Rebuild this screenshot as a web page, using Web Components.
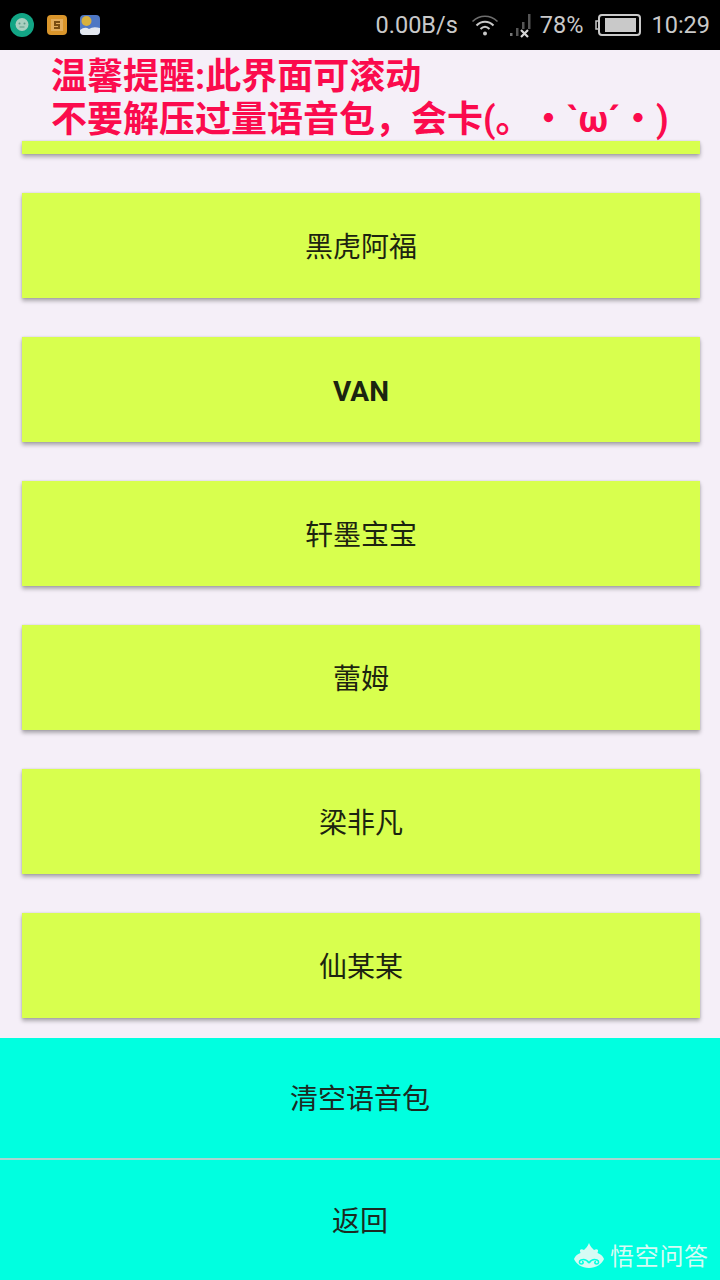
<!DOCTYPE html>
<html>
<head>
<meta charset="utf-8">
<style>
  html, body { margin: 0; padding: 0; background: #f5eff8; }
  body { width: 720px; height: 1280px; overflow: hidden; display: flex; flex-direction: column; position: relative;
    font-family: Roboto, "Noto Sans CJK SC", sans-serif; }
</style>
</head>
<body>
<status-bar></status-bar>
<tip-header>温馨提醒:此界面可滚动<br>不要解压过量语音包，会卡(。<span style="margin-left:17px">・`ω´・)</span></tip-header>
<voice-list>
  <voice-card partial></voice-card>
  <voice-card>黑虎阿福</voice-card>
  <voice-card heavy>VAN</voice-card>
  <voice-card>轩墨宝宝</voice-card>
  <voice-card>蕾姆</voice-card>
  <voice-card>梁非凡</voice-card>
  <voice-card>仙某某</voice-card>
</voice-list>
<action-button>清空语音包</action-button>
<action-button>返回</action-button>
<wukong-mark></wukong-mark>

<script>
class StatusBar extends HTMLElement {
  constructor() {
    super();
    this.shadow = this.attachShadow({ mode: "open" });
  }
  connectedCallback() {
    this.shadow.innerHTML = `
      <style>
        :host { display: flex; align-items: center; height: 50px; background: #000; color: #c9c9c9;
          font: 23.5px Roboto, sans-serif; padding: 0 10px; box-sizing: border-box; flex: none; }
        .left { display: flex; gap: 13px; align-items: center; flex: 1; }
        .right { display: flex; align-items: center; }
        svg { display: block; }
      </style>
      <div class="left">
        <svg width="24" height="24" viewBox="0 0 24 24">
          <circle cx="12" cy="12" r="12" fill="#12a585"/>
          <circle cx="12" cy="11.5" r="6.5" fill="#a9cfc0"/>
          <circle cx="9.5" cy="10.5" r="1" fill="#5c9a86"/><circle cx="14.5" cy="10.5" r="1" fill="#5c9a86"/>
          <path d="M9.5 14h5" stroke="#5c9a86" stroke-width="1"/>
        </svg>
        <svg width="20" height="20" viewBox="0 0 20 20">
          <rect width="20" height="20" rx="4" fill="#d9952b"/>
          <rect x="4" y="4" width="12" height="12" fill="#e3ad5c"/>
          <path d="M13 7H8v3h4v3H7" fill="none" stroke="#7a4d12" stroke-width="2"/>
        </svg>
        <svg width="20" height="20" viewBox="0 0 20 20">
          <rect width="20" height="20" rx="4" fill="#4f78c4"/>
          <circle cx="6.5" cy="6" r="5" fill="#d8b13e"/>
          <path d="M0 15q5-4 9-1 4-3 11-1v3a4 4 0 0 1-4 4H4a4 4 0 0 1-4-4z" fill="#e4e8ef"/>
        </svg>
      </div>
      <div class="right">
        <span>0.00B/s</span>
        <svg style="margin-left:13px" width="28" height="22" viewBox="0 0 28 22" fill="none" stroke="#c9c9c9">
          <path d="M1.5 7.5C9 .5 19 .5 26.5 7.5" stroke-width="1.6" opacity=".55"/>
          <path d="M5.5 11.5c5-5 12-5 17 0" stroke-width="2"/>
          <path d="M9.5 15c3-3 6-3 9 0" stroke-width="2"/>
          <circle cx="14" cy="19.5" r="2" fill="#c9c9c9" stroke="none"/>
        </svg>
        <svg style="margin-left:10px" width="24" height="26" viewBox="0 0 24 26">
          <rect x="1" y="21" width="2.5" height="3" fill="#777"/>
          <rect x="7" y="16" width="2.5" height="8" fill="#555"/>
          <rect x="13" y="10" width="2.5" height="7" fill="#555"/>
          <rect x="19" y="2" width="2.5" height="15" fill="#555"/>
          <path d="M12 18l7 7M19 18l-7 7" stroke="#d5d5d5" stroke-width="2.2"/>
        </svg>
        <span style="margin-left:7px">78%</span>
        <svg style="margin-left:12px" width="46" height="22" viewBox="0 0 46 22">
          <path d="M4 7H1v8h3" fill="none" stroke="#c9c9c9" stroke-width="1.5"/>
          <rect x="4" y="1" width="41" height="20" rx="3" fill="none" stroke="#c9c9c9" stroke-width="2"/>
          <rect x="10" y="4" width="31" height="14" fill="#c9c9c9"/>
        </svg>
        <span style="margin-left:10px">10:29</span>
      </div>
    `;
  }
}

class TipHeader extends HTMLElement {
  constructor() {
    super();
    this.shadow = this.attachShadow({ mode: "open" });
  }
  connectedCallback() {
    this.shadow.innerHTML = `
      <style>
        :host { display: block; height: 91px; box-sizing: border-box; padding: 6px 0 0 51px; flex: none;
          color: #fb0b4d; font: 700 36px/43px Roboto, "Noto Sans CJK SC", sans-serif; white-space: nowrap; }
      </style>
      <slot></slot>
    `;
  }
}

class VoiceList extends HTMLElement {
  constructor() {
    super();
    this.shadow = this.attachShadow({ mode: "open" });
  }
  connectedCallback() {
    this.shadow.innerHTML = `
      <style>
        :host { display: flex; flex-direction: column; gap: 39px; padding: 0 20px 20px 22px; flex: none; }
      </style>
      <slot></slot>
    `;
  }
}

class VoiceCard extends HTMLElement {
  constructor() {
    super();
    this.shadow = this.attachShadow({ mode: "open" });
  }
  connectedCallback() {
    this.shadow.innerHTML = `
      <style>
        :host { display: flex; align-items: center; justify-content: center; height: 105px; box-sizing: border-box;
          padding-top: 4px; background: #d8ff4e;
          color: #1c2410; font: 28px/40px Roboto, "Noto Sans CJK SC", sans-serif;
          box-shadow: 0 3px 4px rgba(0,0,0,.3), 0 0 2px rgba(0,0,0,.14); }
        :host([partial]) { height: 13px; padding-top: 0; }
        :host([heavy]) { font-weight: 700; }
      </style>
      <slot></slot>
    `;
  }
}

class ActionButton extends HTMLElement {
  constructor() {
    super();
    this.shadow = this.attachShadow({ mode: "open" });
  }
  connectedCallback() {
    this.shadow.innerHTML = `
      <style>
        :host { display: flex; align-items: center; justify-content: center; height: 120px; box-sizing: border-box;
          padding-top: 4px; background: #00ffe0;
          color: #1c2a22; font: 28px/40px Roboto, "Noto Sans CJK SC", sans-serif; flex: none; }
        :host(:not(:last-of-type)) { height: 122px; padding-top: 4px; border-bottom: 2px solid #a9d6d0; }
      </style>
      <slot></slot>
    `;
  }
}

class WukongMark extends HTMLElement {
  constructor() {
    super();
    this.shadow = this.attachShadow({ mode: "open" });
  }
  connectedCallback() {
    this.shadow.innerHTML = `
      <style>
        :host { position: absolute; left: 574px; top: 1240px; display: flex; align-items: center; gap: 6px;
          color: #d6fbf4; font: 400 24px/30px "Noto Sans CJK SC", sans-serif; letter-spacing: .7px; white-space: nowrap; }
        svg { display: block; }
      </style>
      <svg width="30" height="27" viewBox="0 0 30 27">
        <path d="M15 1c1 3 3 5 5 7 2-1 3-1 4 0 0 1 0 2-.5 3 3 1 5.500 3 6.500 6-2 5-8 9-15 9S2 22 0 17c1-3 3.500-5 6.500-6C6 10 6 9 6 8c1-1 2-1 4 0 2-2 4-4 5-7z" fill="#d6fbf4"/>
        <path d="M15 21c-2-3-5-4-8-3-2.500 1-2 4 .5 4 2 0 2.500-2 .5-2.500M15 21c2-3 5-4 8-3 2.500 1 2 4-.5 4-2 0-2.500-2-.5-2.500" fill="none" stroke="#00ffe0" stroke-width="1.5"/>
      </svg>
      <span>悟空问答</span>
    `;
  }
}

customElements.define("status-bar", StatusBar);
customElements.define("tip-header", TipHeader);
customElements.define("voice-list", VoiceList);
customElements.define("voice-card", VoiceCard);
customElements.define("action-button", ActionButton);
customElements.define("wukong-mark", WukongMark);
</script>
</body>
</html>
